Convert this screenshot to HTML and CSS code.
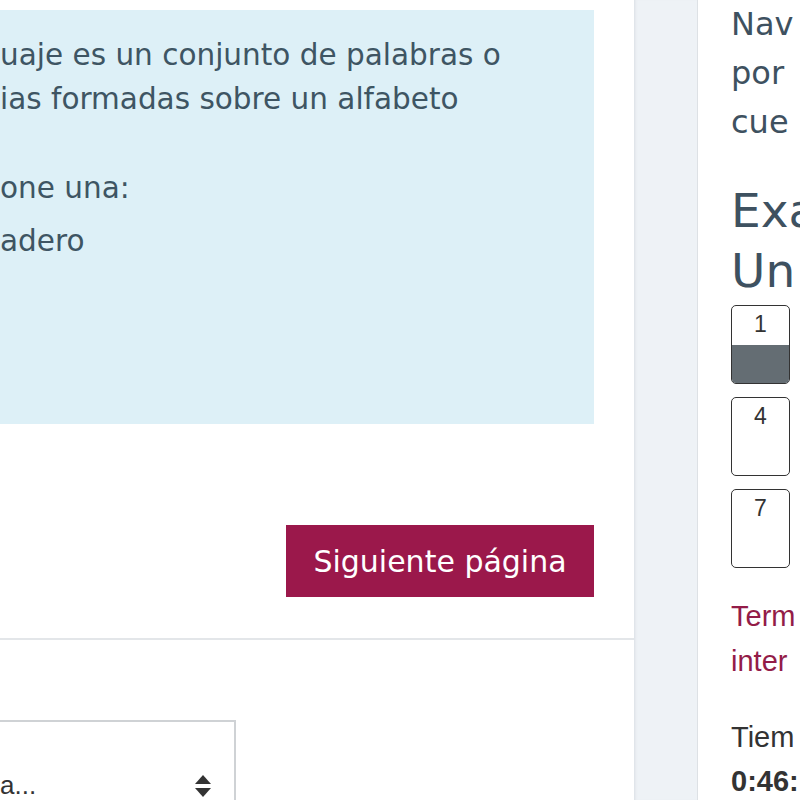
FILE: index.html
```html
<!DOCTYPE html>
<html lang="es">
<head>
<meta charset="utf-8">
<title>Cuestionario</title>
<link rel="stylesheet" href="styles.css">
</head>
<body>
<div class="page">
  <main class="main">
    <section class="question">
      <div class="formulation">
        <p class="qtext">uaje es un conjunto de palabras o<br>ias formadas sobre un alfabeto</p>
        <p class="prompt">one una:</p>
        <p class="answer">adero</p>
      </div>
      <div class="nav-buttons">
        <button class="btn-next" type="button">Siguiente página</button>
      </div>
    </section>
    <section class="jump">
      <div class="select">
        <span class="select-text">a...</span>
        <svg class="select-arrows" width="18" height="24" viewBox="0 0 18 24" aria-hidden="true">
          <path d="M9 1 L17 10 L1 10 Z" fill="#333"/>
          <path d="M1 14 L17 14 L9 23 Z" fill="#333"/>
        </svg>
      </div>
    </section>
  </main>
  <div class="gutter"></div>
  <aside class="panel">
    <h5 class="panel-title"><span>Nav</span><span>por</span><span>cue</span></h5>
    <h3 class="quiz-name"><span>Exa</span><span>Un</span></h3>
    <div class="qnav">
      <div class="qbox answered"><span class="qnum">1</span><span class="qfill"></span></div>
      <div class="qbox"><span class="qnum">4</span><span class="qfill"></span></div>
      <div class="qbox"><span class="qnum">7</span><span class="qfill"></span></div>
    </div>
    <a class="finish" href="#"><span>Term</span><span>inter</span></a>
    <div class="timer">
      <span class="timer-label">Tiem</span>
      <span class="timer-value">0:46:</span>
    </div>
  </aside>
</div>
</body>
</html>
```

FILE: styles.css
```css
html, body {
  margin: 0;
  padding: 0;
}
body {
  width: 800px;
  height: 800px;
  overflow: hidden;
  background: #ffffff;
  font-family: "DejaVu Sans", "Open Sans", sans-serif;
}
.page {
  display: flex;
  width: 800px;
  height: 800px;
}
.main {
  flex: 0 0 634px;
  display: flex;
  flex-direction: column;
  background: #ffffff;
}
.question {
  flex: 0 0 auto;
  padding-top: 10px;
  border-bottom: 2px solid #e3e6e9;
  height: 640px;
  box-sizing: border-box;
}
.formulation {
  width: 594px;
  height: 414px;
  background: #ddf0f7;
  color: #3e5563;
  font-size: 29.5px;
  line-height: 44px;
  padding-top: 23px;
  box-sizing: border-box;
}
.formulation p {
  margin: 0;
  white-space: nowrap;
}
.formulation .prompt {
  margin-top: 45px;
}
.formulation .answer {
  margin-top: 9px;
}
.nav-buttons {
  width: 594px;
  display: flex;
  justify-content: flex-end;
  margin-top: 101px;
}
.btn-next {
  width: 308px;
  height: 72px;
  border: 0;
  border-radius: 0;
  background: #9b184b;
  color: #ffffff;
  font-family: inherit;
  font-size: 30px;
  padding: 0;
}
.jump {
  flex: 0 0 auto;
  padding-top: 80px;
}
.select {
  width: 236px;
  height: 100px;
  border: 2px solid #cfd2d5;
  border-left: 0;
  box-sizing: border-box;
  display: flex;
  align-items: flex-start;
  justify-content: space-between;
  padding: 48px 22px 0 0;
  font-family: "Liberation Sans", Arial, sans-serif;
  font-size: 26px;
  color: #333;
}
.select-text {
  line-height: 30px;
}
.select-arrows {
  margin-top: 4px;
}
.gutter {
  flex: 0 0 63px;
  background: #eef2f6;
  border-right: 1px solid #dde1e5;
  box-shadow: inset 3px 0 3px -2px #d9dee3;
}
.panel {
  flex: 1 1 auto;
  padding-left: 33px;
  background: #ffffff;
  overflow: hidden;
  white-space: nowrap;
}
.panel-title {
  margin: 0;
  font-weight: 400;
  font-size: 32px;
  line-height: 49px;
  color: #3e5160;
}
.panel-title span,
.quiz-name span,
.finish span,
.timer span {
  display: block;
}
.quiz-name {
  margin: 34px 0 0;
  font-weight: 400;
  font-size: 47px;
  line-height: 60px;
  color: #3e5160;
}
.qnav {
  display: flex;
  flex-direction: column;
  gap: 13px;
  margin-top: 4px;
}
.qbox {
  width: 59px;
  height: 79px;
  border: 1.5px solid #333;
  border-radius: 5px;
  box-sizing: border-box;
  overflow: hidden;
  display: flex;
  flex-direction: column;
  background: #fff;
}
.qnum {
  height: 39px;
  text-align: center;
  font-family: "Liberation Sans", Arial, sans-serif;
  font-size: 23px;
  line-height: 36px;
  color: #333;
}
.qfill {
  flex: 1 1 auto;
}
.qbox.answered .qfill {
  background: #646d73;
}
.finish {
  display: block;
  margin-top: 26px;
  font-family: "Liberation Sans", Arial, sans-serif;
  font-size: 29px;
  line-height: 45px;
  color: #931c48;
  text-decoration: none;
}
.timer {
  margin-top: 31px;
  font-family: "Liberation Sans", Arial, sans-serif;
  font-size: 29px;
  line-height: 44px;
  color: #333;
}
.timer-value {
  font-weight: 700;
}
```
